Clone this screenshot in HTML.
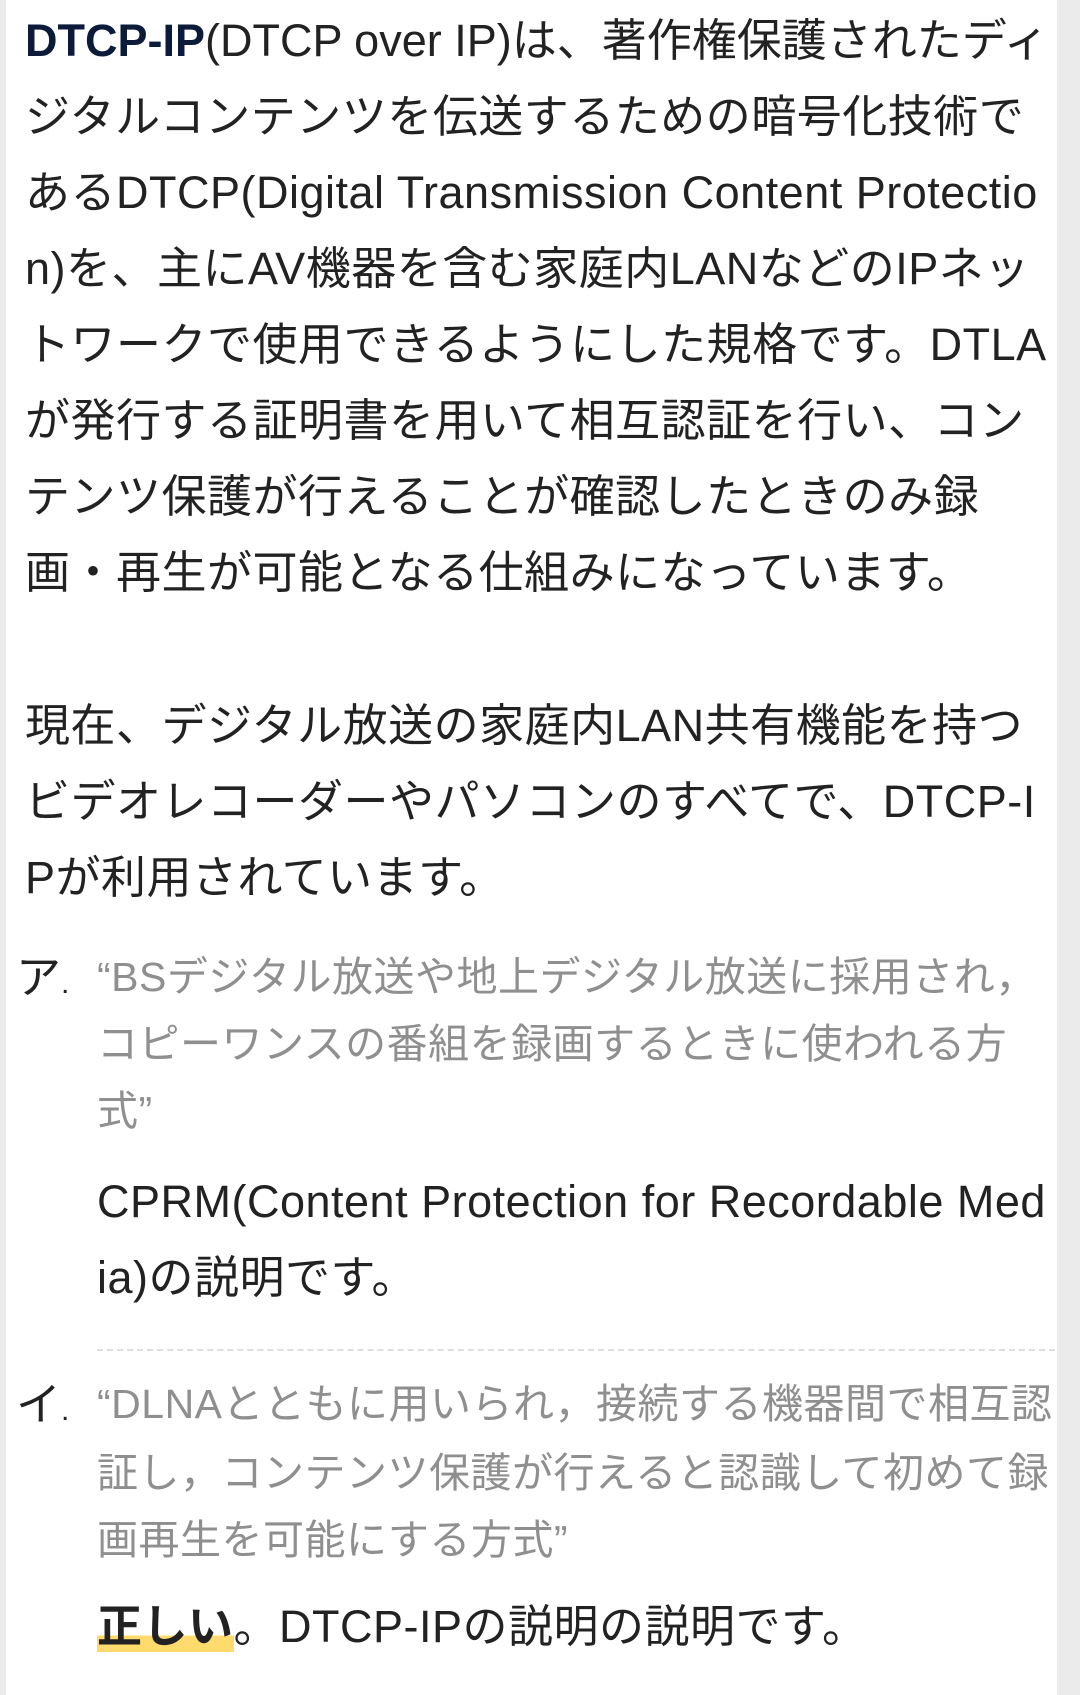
<!DOCTYPE html>
<html><head><meta charset="utf-8">
<style>
html,body{margin:0;padding:0;}
body{width:1080px;height:1695px;position:relative;background:#fff;overflow:hidden;
font-family:"Liberation Sans","Noto Sans CJK JP",sans-serif;color:#222;}
.strip{position:absolute;top:0;bottom:0;background:#ebebeb;z-index:5;}
.l{position:absolute;white-space:nowrap;font-size:45px;line-height:76px;height:76px;letter-spacing:0.5px;}
.g{position:absolute;white-space:nowrap;font-size:41px;line-height:67px;height:67px;color:#8f8f8f;letter-spacing:0.5px;}
.m{position:absolute;font-size:45px;line-height:76px;color:#222;}
b.n{color:#0d1b3a;font-weight:bold;}
.hl{background:linear-gradient(transparent 68%,#ffdb6e 68%);font-weight:bold;}
.dash{position:absolute;left:97px;width:958px;top:1349px;border-top:2px dashed #dedede;}
</style></head><body>
<div class="strip" style="left:0;width:6px"></div>
<div class="strip" style="left:1057px;width:23px"></div>

<div class="l" style="left:25px;top:3px;letter-spacing:0"><b class="n">DTCP-IP</b>(DTCP over IP)は、著作権保護されたディ</div>
<div class="l" style="left:25px;top:79px">ジタルコンテンツを伝送するための暗号化技術で</div>
<div class="l" style="left:25px;top:155px">あるDTCP(Digital Transmission Content Protectio</div>
<div class="l" style="left:25px;top:231px">n)を、主にAV機器を含む家庭内LANなどのIPネッ</div>
<div class="l" style="left:25px;top:307px">トワークで使用できるようにした規格です。DTLA</div>
<div class="l" style="left:25px;top:383px">が発行する証明書を用いて相互認証を行い、コン</div>
<div class="l" style="left:25px;top:459px">テンツ保護が行えることが確認したときのみ録</div>
<div class="l" style="left:25px;top:535px">画・再生が可能となる仕組みになっています。</div>

<div class="l" style="left:25px;top:688px">現在、デジタル放送の家庭内LAN共有機能を持つ</div>
<div class="l" style="left:25px;top:764px">ビデオレコーダーやパソコンのすべてで、DTCP-I</div>
<div class="l" style="left:25px;top:840px">Pが利用されています。</div>

<div class="m" style="left:16px;top:940px">ア<span style="font-size:30px">.</span></div>
<div class="g" style="left:97px;top:944px">“BSデジタル放送や地上デジタル放送に採用され，</div>
<div class="g" style="left:97px;top:1011px">コピーワンスの番組を録画するときに使われる方</div>
<div class="g" style="left:97px;top:1078px">式”</div>
<div class="l" style="left:97px;top:1164px">CPRM(Content Protection for Recordable Med</div>
<div class="l" style="left:97px;top:1240px">ia)の説明です。</div>

<div class="dash"></div>

<div class="m" style="left:16px;top:1367px">イ<span style="font-size:30px">.</span></div>
<div class="g" style="left:97px;top:1371px">“DLNAとともに用いられ，接続する機器間で相互認</div>
<div class="g" style="left:97px;top:1440px">証し，コンテンツ保護が行えると認識して初めて録</div>
<div class="g" style="left:97px;top:1507px">画再生を可能にする方式”</div>
<div class="l" style="left:97px;top:1589px"><span class="hl">正しい</span>。DTCP-IPの説明の説明です。</div>
</body></html>
